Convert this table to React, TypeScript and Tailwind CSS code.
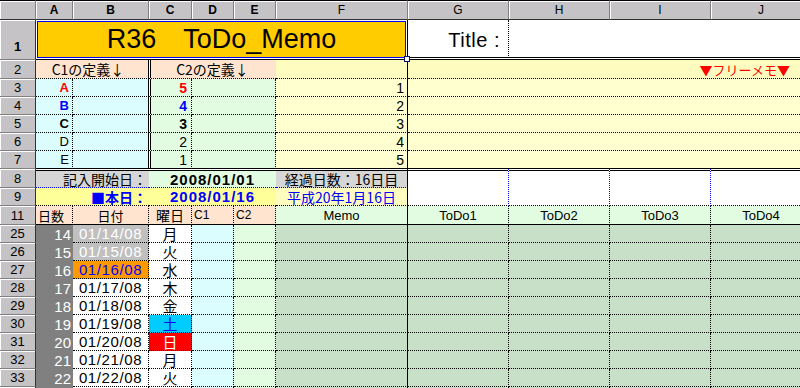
import { Fragment } from 'react';

// Excel-like header cells
const hdr =
  'flex items-center justify-center bg-[#c6c3c6] border-t border-t-black border-r border-r-[#808080] border-b border-b-[#303030] shadow-[inset_1px_1px_0_#fff] text-[12px] leading-none text-black';
const rowHdr =
  'flex items-center justify-center bg-[#c6c3c6] border-r border-r-[#303030] border-b border-b-[#808080] shadow-[inset_1px_1px_0_#fff] text-[13px] leading-none text-black';

// pattern fills (dither averaged to flat colours)
const peach = 'bg-[#ffe4cf]';
const cyan = 'bg-[#dcfdfd]';
const green = 'bg-[#e2fce2]';
const yellow = 'bg-[#ffffcf]';
const yellow2 = 'bg-[#fffcc0]';
const gray = 'bg-[#d6d6d6]';
const jp = "font-['Noto_Sans_CJK_JP',sans-serif]";

// borders
const bd = 'border-r border-b border-dotted border-black';
const bdS = 'border-r border-b border-dotted border-black [border-right-style:solid]';
const bOnly = 'border-b border-dotted border-black';
const dblLeft = 'shadow-[inset_1px_0_0_#fff,inset_2px_0_0_#000]';
const dblTop = 'shadow-[inset_0_1px_0_#fff,inset_0_2px_0_#000]';

const cols = [
  { l: 'A', b: true },
  { l: 'B', b: true },
  { l: 'C', b: true },
  { l: 'D', b: true },
  { l: 'E', b: true },
  { l: 'F', b: false },
  { l: 'G', b: false },
  { l: 'H', b: false },
  { l: 'I', b: false },
  { l: 'J', b: false },
];

const defs = [
  { r: 3, a: 'A', aC: 'text-[#ff0000] font-bold', c: '5', cC: 'text-[#ff0000] font-bold', f: 1 },
  { r: 4, a: 'B', aC: 'text-[#0000ff] font-bold', c: '4', cC: 'text-[#0000ff] font-bold', f: 2 },
  { r: 5, a: 'C', aC: 'text-black font-bold', c: '3', cC: 'text-black font-bold', f: 3 },
  { r: 6, a: 'D', aC: 'text-black', c: '2', cC: 'text-black', f: 4 },
  { r: 7, a: 'E', aC: 'text-black', c: '1', cC: 'text-black', f: 5 },
];

const days = [
  { row: 25, n: '14', date: '01/14/08', day: '月', dateCls: 'bg-[#c0c0c0] text-white', dayCls: 'bg-white text-black' },
  { row: 26, n: '15', date: '01/15/08', day: '火', dateCls: 'bg-[#c0c0c0] text-white', dayCls: 'bg-white text-black' },
  { row: 27, n: '16', date: '01/16/08', day: '水', dateCls: 'bg-[#ff9900] text-[#0000ff]', dayCls: 'bg-white text-black' },
  { row: 28, n: '17', date: '01/17/08', day: '木', dateCls: 'bg-white text-black', dayCls: 'bg-white text-black' },
  { row: 29, n: '18', date: '01/18/08', day: '金', dateCls: 'bg-white text-black', dayCls: 'bg-white text-black' },
  { row: 30, n: '19', date: '01/19/08', day: '土', dateCls: 'bg-white text-black', dayCls: 'bg-[#00ccff] text-[#0000ff]' },
  { row: 31, n: '20', date: '01/20/08', day: '日', dateCls: 'bg-white text-black', dayCls: 'bg-[#ff0000] text-white' },
  { row: 32, n: '21', date: '01/21/08', day: '月', dateCls: 'bg-white text-black', dayCls: 'bg-white text-black' },
  { row: 33, n: '22', date: '01/22/08', day: '火', dateCls: 'bg-white text-black', dayCls: 'bg-white text-black' },
  // only the top edge of row 34 is on screen
  { row: 0, n: '', date: '', day: '', dateCls: 'bg-white text-black', dayCls: 'bg-white text-black' },
];

export default function App() {
  return (
    <div className="relative w-[800px] h-[388px] overflow-hidden bg-white font-['Liberation_Sans','Noto_Sans_CJK_JP',sans-serif] text-black">
      <div className="grid w-[812px] grid-cols-[36px_37px_76px_43px_42px_42px_132px_101px_101px_101px_101px] grid-rows-[20px_40px_19px_repeat(5,18px)_19px_18px_19px_repeat(10,18px)]">
        {/* column headers */}
        <div className={hdr} />
        {cols.map((c) => (
          <div key={c.l} className={`${hdr} ${c.b ? 'font-bold' : 'font-normal'}`}>
            {c.l}
          </div>
        ))}

        {/* row 1 */}
        <div className={`${rowHdr} font-bold items-end pb-[6px]`}>1</div>
        <div className="col-span-6 flex items-center justify-center bg-[#ffcc00] border-r border-b border-black shadow-[inset_0_0_0_1px_#fff,inset_0_0_0_2px_#0000ff] text-[27px] leading-none">
          R36　ToDo_Memo
        </div>
        <div className="flex items-center justify-end pr-[8px] bg-white border-r border-b border-dotted border-black [border-bottom-style:solid] shadow-[inset_0_-1px_0_#fff,inset_0_-2px_0_#000] text-[20px] leading-none tracking-[0.5px]">
          Title :
        </div>
        <div className="col-span-3 bg-white border-b border-black shadow-[inset_0_-1px_0_#fff,inset_0_-2px_0_#000]" />

        {/* row 2 */}
        <div className={rowHdr}>2</div>
        <div className={`col-span-2 flex items-center justify-center pr-[8px] ${peach} ${bdS} ${jp} text-[14px] leading-none`}>
          C1の定義↓
        </div>
        <div className={`col-span-3 flex items-center justify-center ${peach} ${bOnly} ${dblLeft} ${jp} text-[14px] leading-none`}>
          C2の定義↓
        </div>
        <div className={`${yellow2} ${bdS}`} />
        <div className={`col-span-4 flex items-center justify-end pr-[22px] ${yellow2} ${bOnly} ${jp} text-[13px] leading-none text-[#ff0000]`}>
          ▼フリーメモ▼
        </div>

        {/* rows 3-7 */}
        {defs.map((d) => {
          const last = d.r === 7 ? '[border-bottom-style:solid]' : '';
          return (
            <Fragment key={d.r}>
              <div className={rowHdr}>{d.r}</div>
              <div className={`flex items-center justify-end pr-[3px] ${cyan} ${bd} ${last} text-[13px] leading-none ${d.aC}`}>
                {d.a}
              </div>
              <div className={`${cyan} ${bdS} ${last}`} />
              <div className={`flex items-center justify-end pr-[4px] ${green} ${bd} ${last} ${dblLeft} text-[14px] leading-none ${d.cC}`}>
                {d.c}
              </div>
              <div className={`col-span-2 ${green} ${bd} ${last}`} />
              <div className={`flex items-center justify-end pr-[3px] ${yellow} ${bdS} ${last} text-[14px] leading-none`}>
                {d.f}
              </div>
              <div className={`col-span-4 ${yellow} ${bOnly} ${last}`} />
            </Fragment>
          );
        })}

        {/* row 8 */}
        <div className={rowHdr}>8</div>
        <div className={`col-span-2 flex items-center justify-end pr-[2px] pt-[2px] ${gray} ${dblTop} border-b border-dotted border-[#0000ff] ${jp} text-[14px] leading-none`}>
          記入開始日：
        </div>
        <div className={`col-span-3 flex items-center justify-center pt-[2px] ${green} ${dblTop} border-b border-dotted border-[#0000ff] text-[15px] font-bold tracking-[1px] leading-none`}>
          2008/01/01
        </div>
        <div className={`flex items-center justify-center pt-[2px] ${gray} ${dblTop} border-r border-b border-dotted border-r-black border-b-[#0000ff] [border-right-style:solid] ${jp} text-[14px] leading-none`}>
          経過日数：16日目
        </div>
        <div className={`row-span-2 bg-white ${dblTop} border-r border-b border-dotted border-r-[#0000ff] border-b-black`} />
        <div className={`row-span-2 bg-white ${dblTop} border-r border-b border-dotted border-r-[#0000ff] border-b-black`} />
        <div className={`row-span-2 bg-white ${dblTop} border-r border-b border-dotted border-r-[#0000ff] border-b-black`} />
        <div className={`row-span-2 bg-white ${dblTop} border-b border-dotted border-b-black`} />

        {/* row 9 */}
        <div className={rowHdr}>9</div>
        <div className={`col-span-2 flex items-center justify-end pr-[2px] bg-[#ffff99] ${bOnly} ${jp} text-[14px] font-bold leading-none text-[#0000ff]`}>
          ■本日：
        </div>
        <div className={`col-span-3 flex items-center justify-center bg-[#ffff99] ${bOnly} text-[15px] font-bold tracking-[1px] leading-none text-[#0000ff]`}>
          2008/01/16
        </div>
        <div className={`flex items-center justify-center ${yellow2} ${bdS} ${jp} text-[14px] leading-none text-[#0000ff]`}>
          平成20年1月16日
        </div>

        {/* row 11 */}
        <div className={rowHdr}>11</div>
        <div className={`flex items-center justify-start pl-[2px] ${peach} ${bd} [border-bottom-style:solid] ${jp} text-[13px] leading-none`}>
          日数
        </div>
        <div className={`flex items-center justify-center ${peach} ${bd} [border-bottom-style:solid] ${jp} text-[13px] leading-none`}>
          日付
        </div>
        <div className={`flex items-center justify-center ${peach} ${bd} [border-bottom-style:solid] ${jp} text-[14px] leading-none`}>
          曜日
        </div>
        <div className={`flex items-center justify-start pl-[2px] ${peach} ${bd} [border-bottom-style:solid] text-[12px] leading-none`}>
          C1
        </div>
        <div className={`flex items-center justify-start pl-[2px] ${peach} ${bd} [border-bottom-style:solid] text-[12px] leading-none`}>
          C2
        </div>
        <div className={`flex items-center justify-center ${green} border-r border-b border-solid border-black text-[13px] leading-none`}>
          Memo
        </div>
        {['ToDo1', 'ToDo2', 'ToDo3', 'ToDo4'].map((t) => (
          <div key={t} className={`flex items-center justify-center ${green} ${bd} [border-bottom-style:solid] text-[13px] leading-none`}>
            {t}
          </div>
        ))}

        {/* day rows */}
        {days.map((d) => (
          <Fragment key={d.row}>
            <div className={rowHdr}>{d.row ? d.row : ''}</div>
            <div className="flex items-center justify-end pr-[2px] bg-[#808080] text-white text-[15px] leading-none">
              {d.n}
            </div>
            <div className={`flex items-center justify-center ${bd} ${d.dateCls} text-[15px] tracking-[0.6px] leading-none`}>
              {d.date}
            </div>
            <div className={`flex items-center justify-center ${bd} ${d.dayCls} ${jp} text-[15px] leading-none`}>
              {d.day}
            </div>
            <div className={`${cyan} ${bd}`} />
            <div className={`${green} ${bd}`} />
            <div className={`bg-[#c8e0c8] ${bdS}`} />
            <div className={`bg-[#c8e0c8] ${bd}`} />
            <div className={`bg-[#c8e0c8] ${bd}`} />
            <div className={`bg-[#c8e0c8] ${bd}`} />
            <div className={`bg-[#c8e0c8] ${bd}`} />
          </Fragment>
        ))}
      </div>

      {/* fill handle of the selection */}
      <div className="absolute left-[404px] top-[56px] w-[6px] h-[6px] border border-[#10106a] bg-white" />
    </div>
  );
}
